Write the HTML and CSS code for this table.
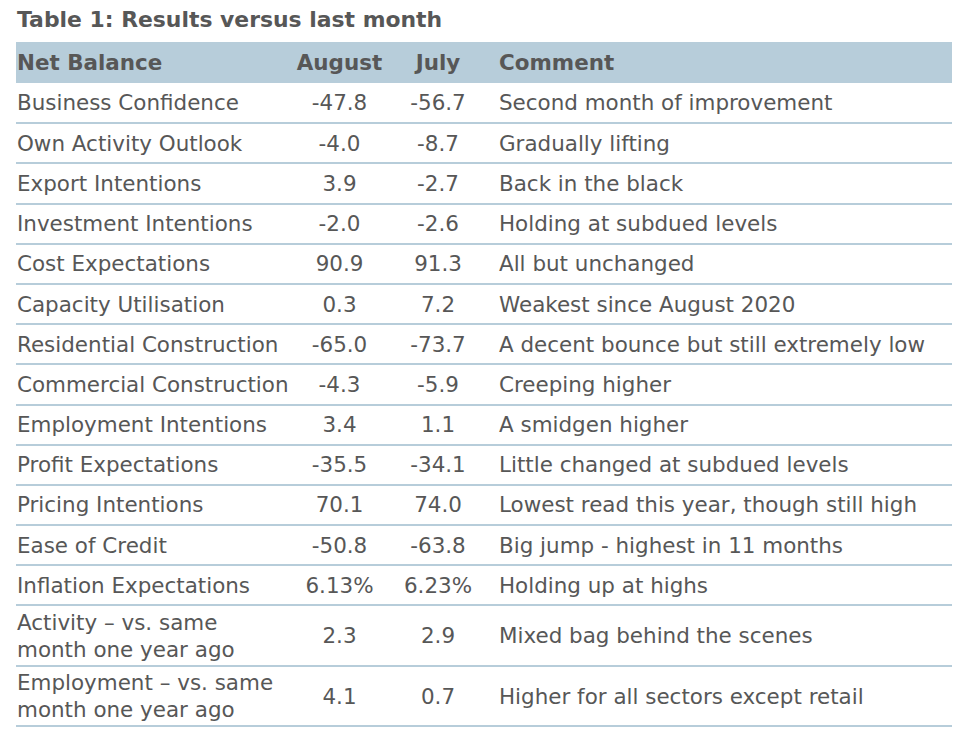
FILE: index.html
```html
<!DOCTYPE html>
<html>
<head>
<meta charset="utf-8">
<link rel="stylesheet" href="styles.css">
</head>
<body>
<div class="page">
  <h1 class="title">Table 1: Results versus last month</h1>
  <table class="results">
    <colgroup>
      <col class="c-name"><col class="c-aug"><col class="c-jul"><col class="c-comment">
    </colgroup>
    <thead>
      <tr>
        <th class="name">Net Balance</th>
        <th class="num">August</th>
        <th class="num">July</th>
        <th class="comment">Comment</th>
      </tr>
    </thead>
    <tbody>
      <tr><td class="name">Business Confidence</td><td class="num">-47.8</td><td class="num">-56.7</td><td class="comment">Second month of improvement</td></tr>
      <tr><td class="name">Own Activity Outlook</td><td class="num">-4.0</td><td class="num">-8.7</td><td class="comment">Gradually lifting</td></tr>
      <tr><td class="name">Export Intentions</td><td class="num">3.9</td><td class="num">-2.7</td><td class="comment">Back in the black</td></tr>
      <tr><td class="name">Investment Intentions</td><td class="num">-2.0</td><td class="num">-2.6</td><td class="comment">Holding at subdued levels</td></tr>
      <tr><td class="name">Cost Expectations</td><td class="num">90.9</td><td class="num">91.3</td><td class="comment">All but unchanged</td></tr>
      <tr><td class="name">Capacity Utilisation</td><td class="num">0.3</td><td class="num">7.2</td><td class="comment">Weakest since August 2020</td></tr>
      <tr><td class="name">Residential Construction</td><td class="num">-65.0</td><td class="num">-73.7</td><td class="comment">A decent bounce but still extremely low</td></tr>
      <tr><td class="name">Commercial Construction</td><td class="num">-4.3</td><td class="num">-5.9</td><td class="comment">Creeping higher</td></tr>
      <tr><td class="name">Employment Intentions</td><td class="num">3.4</td><td class="num">1.1</td><td class="comment">A smidgen higher</td></tr>
      <tr><td class="name">Profit Expectations</td><td class="num">-35.5</td><td class="num">-34.1</td><td class="comment">Little changed at subdued levels</td></tr>
      <tr><td class="name">Pricing Intentions</td><td class="num">70.1</td><td class="num">74.0</td><td class="comment">Lowest read this year, though still high</td></tr>
      <tr><td class="name">Ease of Credit</td><td class="num">-50.8</td><td class="num">-63.8</td><td class="comment">Big jump - highest in 11 months</td></tr>
      <tr><td class="name">Inflation Expectations</td><td class="num">6.13%</td><td class="num">6.23%</td><td class="comment">Holding up at highs</td></tr>
      <tr class="tall"><td class="name">Activity – vs. same<br>month one year ago</td><td class="num">2.3</td><td class="num">2.9</td><td class="comment">Mixed bag behind the scenes</td></tr>
      <tr class="tall"><td class="name">Employment – vs. same<br>month one year ago</td><td class="num">4.1</td><td class="num">0.7</td><td class="comment">Higher for all sectors except retail</td></tr>
    </tbody>
  </table>
</div>
</body>
</html>
```
FILE: styles.css
```css
html, body {
  margin: 0;
  padding: 0;
  background: #ffffff;
}

.page {
  padding: 5px 11px 0 16px;
  font-family: "DejaVu Sans", Verdana, sans-serif;
  color: #575757;
}

.title {
  margin: 0 0 7px 1px;
  font-size: 21.9px;
  line-height: 30px;
  font-weight: bold;
  color: #575757;
}

.results {
  width: 936px;
  border-collapse: collapse;
  table-layout: fixed;
  font-size: 21.45px;
}

.c-name { width: 273px; }
.c-aug { width: 101px; }
.c-jul { width: 96px; }
.c-comment { width: auto; }

.results th,
.results td {
  padding: 0;
  white-space: nowrap;
  vertical-align: middle;
}

.results thead tr {
  background: #b7cdda;
  height: 41px;
}

.results th {
  font-weight: bold;
  text-align: left;
}

.results tbody tr {
  height: 40.2px;
  border-bottom: 2.5px solid #b7cdda;
}

.results tbody tr.tall {
  height: 60.5px;
}

.results .name {
  padding-left: 1px;
  text-align: left;
  line-height: 27px;
}

.results .num {
  text-align: center;
}

.results .comment {
  padding-left: 13px;
  text-align: left;
}
```
